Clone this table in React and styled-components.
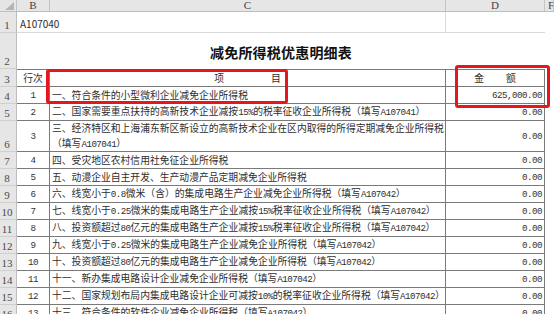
import React from "react";
import styled, { createGlobalStyle } from "styled-components";

const GlobalStyle = createGlobalStyle`
  html, body {
    margin: 0;
    padding: 0;
    background: #fff;
  }
  body {
    width: 554px;
    height: 314px;
    overflow: hidden;
  }
`;

const COLS = "17px 33px 396px 99px 1fr";
const LINE = "#7a7a7a";
const GRID = "#d8d8d8";
const CJK = `"Noto Sans CJK SC", "Noto Sans", sans-serif`;
const MONO = `"Liberation Mono", monospace`;

const Sheet = styled.div`
  position: relative;
  width: 554px;
  height: 314px;
  overflow: hidden;
  font-family: ${CJK};
  color: #2e2e2e;
`;

const HeaderBar = styled.div`
  display: grid;
  grid-template-columns: ${COLS};
  height: 12px;
  box-sizing: border-box;
  background: #e6e6e6;
  border-bottom: 1px solid #bdbdbd;
`;

const Corner = styled.div`
  position: relative;
  border-right: 1px solid #c4c4c4;
  svg {
    position: absolute;
    right: 2px;
    bottom: 1px;
  }
`;

const ColHead = styled.div`
  display: flex;
  align-items: center;
  justify-content: ${p => (p.$left ? "flex-start" : "center")};
  padding-left: ${p => (p.$left ? "3px" : "0")};
  border-right: 1px solid #c4c4c4;
  font: 11px "Liberation Serif", serif;
  line-height: 11px;
  color: #444;
  overflow: hidden;
`;

const Row = styled.div`
  display: grid;
  grid-template-columns: ${COLS};
  height: ${p => p.$h}px;
`;

const RowHead = styled.div`
  box-sizing: border-box;
  display: flex;
  align-items: flex-end;
  justify-content: center;
  padding: 0 2px 1px 0;
  background: #e6e6e6;
  border-right: 1px solid #bdbdbd;
  border-bottom: 1px solid #cfcfcf;
  font: 11px "Liberation Serif", serif;
  line-height: 12px;
  color: #4a4a4a;
  white-space: nowrap;
  overflow: hidden;
`;

const Cell = styled.div`
  box-sizing: border-box;
  display: flex;
  align-items: center;
  justify-content: ${p =>
    p.$align === "right" ? "flex-end" : p.$align === "center" ? "center" : "flex-start"};
  padding: 0 2px;
  border-right: 1px solid ${LINE};
  border-bottom: 1px solid ${LINE};
  ${p => p.$top && `border-top: 1px solid ${LINE};`}
  font-size: 9.8px;
  line-height: 15px;
  white-space: nowrap;
  overflow: hidden;
`;

const Num = styled.span`
  font-family: ${MONO};
  font-size: 9.2px;
  letter-spacing: -0.52px;
  color: #333;
`;

const Latin = styled.span`
  font-family: ${MONO};
  font-size: 9.2px;
  letter-spacing: -0.52px;
`;

const PlainCell = styled.div`
  box-sizing: border-box;
  display: flex;
  align-items: center;
  grid-column: ${p => p.$span || "auto"};
  padding: 2px 3px 0;
  border-bottom: ${p => (p.$grid ? `1px solid ${GRID}` : "none")};
  border-right: ${p => (p.$rgrid ? `1px solid ${GRID}` : "none")};
  font-size: 10px;
  white-space: nowrap;
`;

const Title = styled.div`
  grid-column: 2 / 5;
  display: flex;
  align-items: center;
  justify-content: center;
  padding-top: 2px;
  font-size: 14px;
  font-weight: 700;
  color: #111;
  letter-spacing: 0.2px;
`;

const Spread = styled.span`
  display: inline-flex;
  gap: ${p => p.$gap}px;
`;

const Mark = styled.div`
  position: absolute;
  box-sizing: border-box;
  border: 3px solid #e3171d;
  border-radius: 3px;
`;

const rows = [
  { n: 1, text: "一、符合条件的小型微利企业减免企业所得税", amount: "625,000.00" },
  { n: 2, text: "二、国家需要重点扶持的高新技术企业减按15%的税率征收企业所得税（填写A107041）" },
  {
    n: 3,
    text: "三、经济特区和上海浦东新区新设立的高新技术企业在区内取得的所得定期减免企业所得税",
    text2: "（填写A107041）",
    h: 31,
  },
  { n: 4, text: "四、受灾地区农村信用社免征企业所得税" },
  { n: 5, text: "五、动漫企业自主开发、生产动漫产品定期减免企业所得税" },
  { n: 6, text: "六、线宽小于0.8微米（含）的集成电路生产企业减免企业所得税（填写A107042）" },
  { n: 7, text: "七、线宽小于0.25微米的集成电路生产企业减按15%税率征收企业所得税（填写A107042）" },
  { n: 8, text: "八、投资额超过80亿元的集成电路生产企业减按15%税率征收企业所得税（填写A107042）" },
  { n: 9, text: "九、线宽小于0.25微米的集成电路生产企业减免企业所得税（填写A107042）" },
  { n: 10, text: "十、投资额超过80亿元的集成电路生产企业减免企业所得税（填写A107042）" },
  { n: 11, text: "十一、新办集成电路设计企业减免企业所得税（填写A107042）" },
  { n: 12, text: "十二、国家规划布局内集成电路设计企业可减按10%的税率征收企业所得税（填写A107042）" },
  { n: 13, text: "十三、符合条件的软件企业减免企业所得税（填写A107042）" },
];

// half-width runs get a narrow monospace face, like the sheet's Song font
const mixed = s =>
  s.split(/([A-Za-z0-9.%]+)/).map((part, i) =>
    i % 2 ? <Latin key={i}>{part}</Latin> : part
  );

export default function App() {
  return (
    <Sheet>
      <GlobalStyle />
      <HeaderBar>
        <Corner>
          <svg width="9" height="8" viewBox="0 0 9 8">
            <polygon points="9,0 9,8 0,8" fill="#b5b5b5" />
          </svg>
        </Corner>
        <ColHead>B</ColHead>
        <ColHead>C</ColHead>
        <ColHead>D</ColHead>
        <ColHead $left>F</ColHead>
      </HeaderBar>

      <Row $h={21}>
        <RowHead>1</RowHead>
        <PlainCell $span="span 2" $grid $rgrid>A107040</PlainCell>
        <PlainCell $grid />
        <div />
      </Row>

      <Row $h={36}>
        <RowHead>2</RowHead>
        <Title>减免所得税优惠明细表</Title>
        <div />
      </Row>

      <Row $h={18}>
        <RowHead>3</RowHead>
        <Cell $top $align="center">行次</Cell>
        <Cell $top $align="center">
          <Spread $gap={47}>
            <span>项</span>
            <span>目</span>
          </Spread>
        </Cell>
        <Cell $top $align="center">
          <Spread $gap={22}>
            <span>金</span>
            <span>额</span>
          </Spread>
        </Cell>
        <div />
      </Row>

      {rows.map((r, i) => (
        <Row key={r.n} $h={r.h || 17}>
          <RowHead>{i + 4}</RowHead>
          <Cell $align="center">
            <Num>{r.n}</Num>
          </Cell>
          <Cell>
            {r.text2 ? (
              <span>
                {mixed(r.text)}
                <br />
                {mixed(r.text2)}
              </span>
            ) : (
              <span>{mixed(r.text)}</span>
            )}
          </Cell>
          <Cell $align="right">
            <Num>{r.amount || "0.00"}</Num>
          </Cell>
          <div />
        </Row>
      ))}

      <Mark style={{ left: 46, top: 69, width: 242, height: 35 }} />
      <Mark style={{ left: 455, top: 65, width: 95, height: 43 }} />
    </Sheet>
  );
}
